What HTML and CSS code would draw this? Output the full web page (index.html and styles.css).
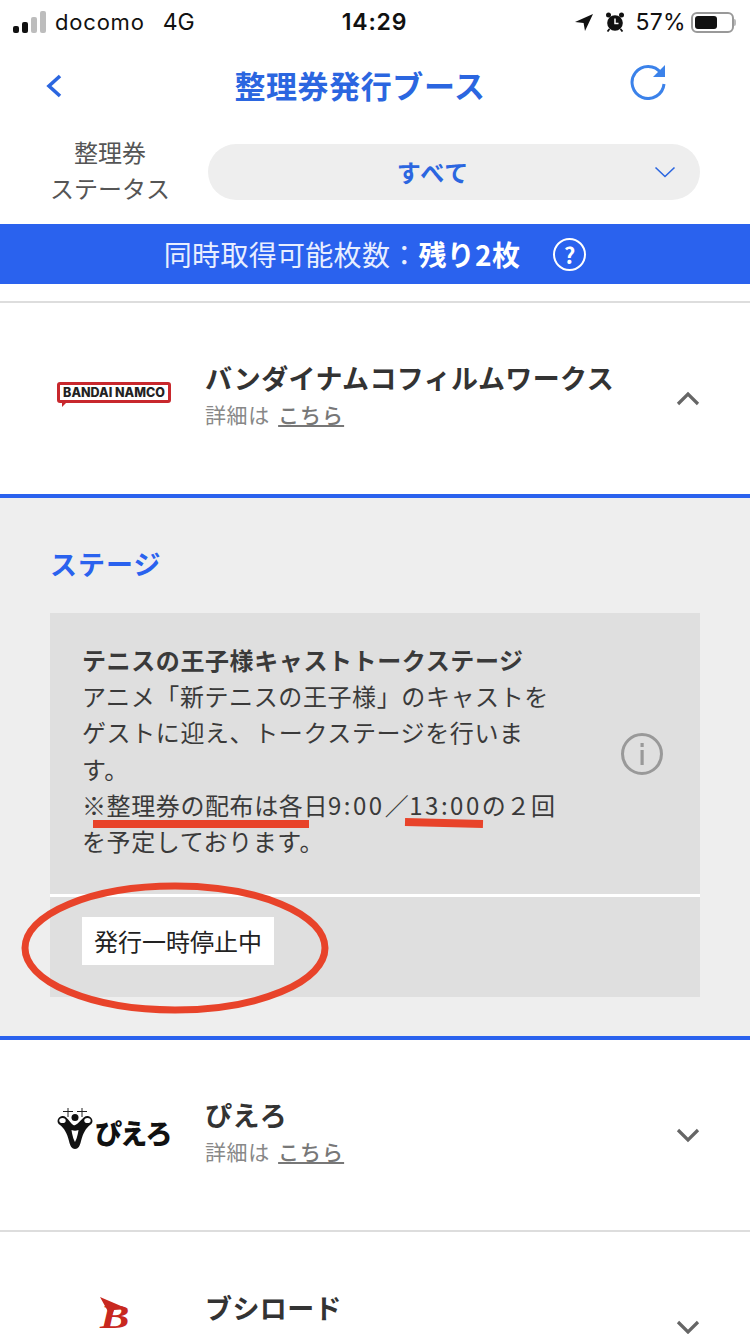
FILE: index.html
```html
<!DOCTYPE html>
<html lang="ja">
<head>
    <meta charset="UTF-8">
    <meta name="viewport" content="width=device-width, initial-scale=1.0">
    <title>整理券発行ブース</title>
    <link rel="stylesheet" href="styles.css">
</head>
<body>
    <div class="status-bar">
        <div class="status-left">
            <svg class="signal" width="33" height="22" viewBox="0 0 33 22">
                <rect x="0" y="15" width="6" height="7" rx="2" fill="#111"/>
                <rect x="9" y="11" width="6" height="11" rx="2" fill="#111"/>
                <rect x="18" y="6" width="6" height="16" rx="2" fill="#bdbdbd"/>
                <rect x="27" y="0" width="6" height="22" rx="2" fill="#bdbdbd"/>
            </svg>
            <span class="carrier">docomo</span>
            <span class="network">4G</span>
        </div>
        <div class="status-time">14:29</div>
        <div class="status-right">
            <svg width="18" height="17" viewBox="0 0 18 17"><path d="M18 0L0 8 8.600 9 10 17z" fill="#111"/></svg>
            <svg class="alarm" width="20" height="20" viewBox="0 0 20 20">
                <circle cx="10" cy="11" r="7.800" fill="#111"/>
                <circle cx="3.500" cy="3" r="2.500" fill="#111"/>
                <circle cx="16.500" cy="3" r="2.500" fill="#111"/>
                <path d="M10 6.500v5h3.500" fill="none" stroke="#fff" stroke-width="1.500"/>
                <path d="M4.500 17l-2 2.500M15.500 17l2 2.500" stroke="#111" stroke-width="1.800"/>
            </svg>
            <span class="battery-text">57%</span>
            <div class="battery"><div class="battery-level"></div></div>
            <div class="battery-tip"></div>
        </div>
    </div>

    <div class="nav">
        <svg class="nav-back" width="16" height="24" viewBox="0 0 16 24"><path d="M14 2L3 12l11 10" fill="none" stroke="#2b66e0" stroke-width="3.600"/></svg>
        <h1>整理券発行ブース</h1>
        <svg class="nav-reload" width="38" height="36" viewBox="0 0 38 36">
            <path d="M32 9A16 16 0 1 0 35 20" fill="none" stroke="#3b82ea" stroke-width="3"/>
            <path d="M36 1v12H24z" fill="#3b82ea"/>
        </svg>
    </div>

    <div class="filter">
        <div class="filter-label">整理券<br>ステータス</div>
        <div class="filter-select">
            <span>すべて</span>
            <svg class="filter-arrow" width="22" height="12" viewBox="0 0 22 12"><path d="M1.500 1.500L11 10.500l9.500-9" fill="none" stroke="#2b66e0" stroke-width="1.600"/></svg>
        </div>
    </div>

    <div class="limit-bar">
        <span>同時取得可能枚数：<b>残り2枚</b></span>
        <span class="help">?</span>
    </div>

    <div class="booth-list">
        <div class="booth">
            <div class="booth-logo logo-bandai">
                <span class="bandai-text">BANDAI NAMCO</span>
                <span class="bandai-tail"></span>
            </div>
            <div class="booth-info">
                <div class="booth-name">バンダイナムコフィルムワークス</div>
                <div class="booth-detail">詳細は <a>こちら</a></div>
            </div>
            <svg class="booth-arrow" width="24" height="15" viewBox="0 0 24 15"><path d="M2 13L12 3l10 10" fill="none" stroke="#666" stroke-width="3.200"/></svg>
        </div>

        <div class="booth-body">
            <h2>ステージ</h2>
            <div class="stage-card">
                <div class="stage-main">
                    <p class="stage-text"><b>テニスの王子様キャストトークステージ</b><br>アニメ「新テニスの王子様」のキャストを<br>ゲストに迎え、トークステージを行いま<br>す。<br>※整理券の配布は各日<span class="digits">9:00</span>／<span class="digits">13:00</span>の２回<br>を予定しております。</p>
                    <svg class="stage-info" width="44" height="44" viewBox="0 0 44 44">
                        <circle cx="22" cy="22" r="19.500" fill="none" stroke="#999" stroke-width="3"/>
                        <rect x="20.500" y="18" width="3.200" height="15" fill="#999"/>
                        <rect x="20.500" y="11" width="3.200" height="4" fill="#999"/>
                    </svg>
                    <div class="mark-line mark-a"></div>
                    <div class="mark-line mark-b"></div>
                </div>
                <div class="stage-foot">
                    <span class="stage-state">発行一時停止中</span>
                </div>
                <svg class="mark-circle" width="310" height="134" viewBox="0 0 310 134">
                    <ellipse cx="155" cy="67" rx="150" ry="62" fill="none" stroke="#e8432a" stroke-width="7"/>
                </svg>
            </div>
        </div>

        <div class="booth booth-open">
            <div class="booth-logo logo-piero">
                <svg width="36" height="41" viewBox="0 0 36 41">
                    <path d="M6 3.500h10M11 0v9M20 3.500h10M25 0v9" stroke="#222" stroke-width="1"/>
                    <circle cx="18" cy="9.500" r="3.500" fill="#111"/>
                    <path d="M18 18C13 16 10 7 5 8 0 9 -1 15 3 17c4 3 7 8 9 16 1 5 3 8 6 8s5-3 6-8c2-8 5-13 9-16 4-2 3-8-2-9-5-1-8 8-15 10z" fill="#111"/>
                    <ellipse cx="5.500" cy="12.500" rx="3.200" ry="2.600" fill="#fff"/>
                    <ellipse cx="30.500" cy="12.500" rx="3.200" ry="2.600" fill="#fff"/>
                    <path d="M14.500 22c1 7 2.500 10 3.500 12 1-2 2.500-5 3.500-12-2.500 1-4.500 1-7 0z" fill="#fff"/>
                </svg>
                <span class="piero-text">ぴえろ</span>
            </div>
            <div class="booth-info">
                <div class="booth-name">ぴえろ</div>
                <div class="booth-detail">詳細は <a>こちら</a></div>
            </div>
            <svg class="booth-arrow" width="24" height="15" viewBox="0 0 24 15"><path d="M2 2l10 10L22 2" fill="none" stroke="#666" stroke-width="3.200"/></svg>
        </div>

        <div class="booth booth-cut">
            <div class="booth-logo logo-bushiroad">
                <svg width="32" height="32" viewBox="0 0 32 32"><path d="M0 0l28 12-14 1-3 7z" fill="#c8281f"/></svg>
                <span class="bushiroad-text">B</span>
            </div>
            <div class="booth-info">
                <div class="booth-name">ブシロード</div>
            </div>
            <svg class="booth-arrow" width="24" height="15" viewBox="0 0 24 15"><path d="M2 2l10 10L22 2" fill="none" stroke="#666" stroke-width="3.200"/></svg>
        </div>
    </div>
</body>
</html>
```

FILE: styles.css
```css
html {
    height: 1334px;
    overflow: hidden;
}
body {
    margin: 0;
    height: 1334px;
    overflow: hidden;
    background-color: white;
    color: #3a3a3a;
    font-family: "Noto Sans CJK JP", "Noto Sans", sans-serif;
}

/* status bar */
.status-bar {
    display: grid;
    grid-template-columns: 1fr auto 1fr;
    align-items: center;
    height: 44px;
    padding: 0 14px 0 13px;
    color: #111;
    font-family: Inter, "Liberation Sans", sans-serif;
}
.status-left, .status-right {
    display: flex;
    align-items: center;
}
.status-right {
    justify-content: flex-end;
}
.carrier {
    margin-left: 9px;
    font-size: 22px;
    letter-spacing: 0.8px;
}
.network {
    margin-left: 18px;
    font-size: 23px;
}
.status-time {
    font-size: 23px;
    font-weight: 600;
    letter-spacing: 0.8px;
}
.alarm {
    margin-left: 12px;
}
.battery-text {
    margin-left: 11px;
    font-size: 23px;
    letter-spacing: 0.3px;
}
.battery {
    width: 43px;
    height: 21px;
    margin-left: 5px;
    padding: 2px;
    box-sizing: border-box;
    border: 2px solid #999;
    border-radius: 6px;
}
.battery-level {
    width: 22px;
    height: 100%;
    background-color: #111;
    border-radius: 3px;
}
.battery-tip {
    width: 2px;
    height: 7px;
    background-color: #bbb;
    border-radius: 0 2px 2px 0;
}

/* nav */
.nav {
    position: relative;
    display: flex;
    justify-content: center;
    align-items: center;
    height: 84px;
    padding-right: 30px;
    padding-bottom: 4px;
    box-sizing: border-box;
}
.nav h1 {
    margin: 0;
    color: #2b66e0;
    font-size: 31px;
    font-weight: 700;
    line-height: 1;
    letter-spacing: 0.6px;
}
.nav-back {
    position: absolute;
    left: 46px;
    top: 30px;
}
.nav-reload {
    position: absolute;
    left: 629px;
    top: 20px;
}

/* filter */
.filter {
    display: flex;
    align-items: center;
    gap: 38px;
    height: 56px;
    margin-top: 16px;
    padding: 0 50px;
}
.filter-label {
    width: 120px;
    padding-bottom: 4px;
    color: #555;
    font-size: 24px;
    line-height: 36px;
    text-align: center;
}
.filter-select {
    position: relative;
    flex: 1;
    height: 56px;
    padding-right: 42px;
    box-sizing: border-box;
    line-height: 55px;
    background-color: #eeeeee;
    border-radius: 28px;
    color: #2b66e0;
    font-size: 24px;
    font-weight: 700;
    letter-spacing: 1px;
    text-align: center;
}
.filter-arrow {
    position: absolute;
    right: 24px;
    top: 22px;
}

/* limit bar */
.limit-bar {
    display: flex;
    align-items: center;
    justify-content: center;
    gap: 33px;
    height: 60px;
    margin-top: 24px;
    background-color: #2a62ee;
    color: #e8eeff;
    font-size: 28px;
    letter-spacing: 0.3px;
}
.limit-bar b {
    color: white;
}
.help {
    width: 29px;
    height: 29px;
    border: 2.500px solid white;
    border-radius: 50%;
    color: white;
    font-size: 22px;
    font-weight: 700;
    line-height: 29px;
    text-align: center;
}

/* booths */
.booth-list {
    margin-top: 17px;
    border-top: 2px solid #dddddd;
}
.booth {
    display: flex;
    align-items: center;
    height: 191px;
    padding: 0 50px 0 55px;
}
.booth-open {
    height: 190px;
    border-bottom: 2px solid #dddddd;
}
.booth-cut {
    align-items: flex-start;
    height: 102px;
    padding-top: 57px;
    box-sizing: border-box;
}
.booth-cut .booth-arrow {
    margin-top: 31px;
}
.booth-logo {
    width: 150px;
    flex-shrink: 0;
}
.booth-info {
    flex: 1;
    padding-bottom: 7px;
}
.booth-cut .booth-info {
    padding-bottom: 0;
}
.booth-name {
    color: #333;
    font-size: 27px;
    font-weight: 700;
    line-height: 38px;
    letter-spacing: 0.4px;
}
.booth-detail {
    color: #888;
    font-size: 21px;
    line-height: 34px;
    letter-spacing: 0.6px;
}
.booth-detail a {
    margin-left: 3px;
    color: #777;
    font-weight: 500;
    letter-spacing: 1px;
    text-decoration: underline;
}
.booth-arrow {
    flex-shrink: 0;
}

/* logos */
.logo-bandai {
    position: relative;
    width: 148px;
    margin: 0 0 13px 2px;
}
.bandai-text {
    display: block;
    width: 114px;
    height: 21px;
    box-sizing: border-box;
    border: 3px solid #c8282d;
    border-radius: 3px;
    color: #222;
    font-family: Inter, "Liberation Sans", sans-serif;
    font-size: 12.500px;
    font-weight: 800;
    line-height: 15px;
    text-align: center;
    white-space: nowrap;
}
.bandai-tail {
    position: absolute;
    left: 5px;
    top: 20px;
    border-top: 5px solid #c8282d;
    border-right: 5px solid transparent;
}
.logo-piero {
    display: flex;
    align-items: flex-end;
    gap: 2px;
    width: 148px;
    margin-left: 2px;
    padding-bottom: 14px;
}
.piero-text {
    color: #111;
    font-size: 27px;
    font-weight: 900;
    line-height: 32px;
    letter-spacing: -1.800px;
}
.logo-bushiroad {
    position: relative;
    width: 105px;
    height: 32px;
    margin-top: 8px;
    padding-left: 45px;
}
.bushiroad-text {
    position: absolute;
    left: 45px;
    top: 3px;
    color: #c8281f;
    font-family: "Liberation Serif", serif;
    font-size: 34px;
    font-style: italic;
    font-weight: 700;
    line-height: 34px;
    transform: scaleX(1.300);
    transform-origin: left;
}

/* opened booth */
.booth-body {
    height: 538px;
    border-top: 4px solid #2a62ee;
    border-bottom: 4px solid #2a62ee;
    background-color: #eeeeee;
}
.booth-body h2 {
    margin: 0;
    padding: 46px 50px 0;
    color: #2a62ee;
    font-size: 27px;
    font-weight: 700;
    line-height: 40px;
    letter-spacing: 1px;
}
.stage-card {
    position: relative;
    margin: 29px 50px 0;
}
.stage-main {
    position: relative;
    display: flex;
    align-items: center;
    height: 281px;
    padding: 0 36px 0 32px;
    background-color: #dfdfdf;
}
.stage-text {
    flex: 1;
    margin: 0 0 6px;
    font-size: 24px;
    line-height: 36.300px;
    letter-spacing: 0.6px;
    white-space: nowrap;
}
.digits {
    letter-spacing: 2.500px;
}
.stage-foot {
    display: flex;
    align-items: flex-start;
    height: 103px;
    box-sizing: border-box;
    padding: 20px 32px 0;
    border-top: 3px solid white;
    background-color: #dfdfdf;
}
.stage-state {
    padding: 0 12px;
    background-color: white;
    color: #222;
    font-size: 24px;
    line-height: 48px;
}

/* red marks drawn on top of the screenshot */
.mark-line {
    position: absolute;
    height: 8px;
    background-color: #e8432a;
}
.mark-a {
    left: 43px;
    top: 207px;
    width: 216px;
}
.mark-b {
    left: 355px;
    top: 206px;
    width: 78px;
    transform: rotate(1.500deg);
}
.mark-circle {
    position: absolute;
    left: -30px;
    top: 268px;
}
```
